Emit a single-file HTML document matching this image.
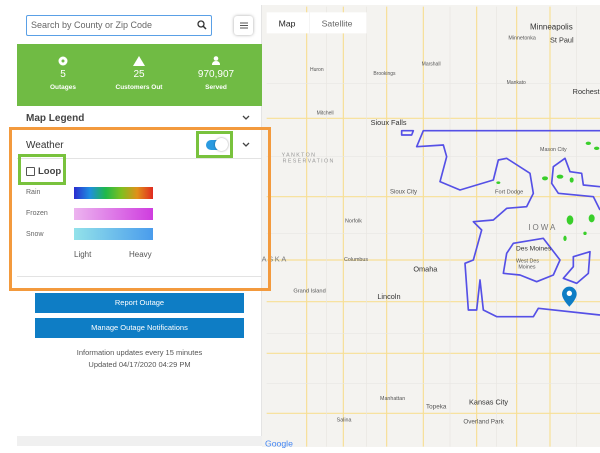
<!DOCTYPE html>
<html><head><meta charset="utf-8"><style>
*{box-sizing:border-box;margin:0;padding:0}
body{width:600px;height:453px;background:#fff;font-family:"Liberation Sans",sans-serif;position:relative;overflow:hidden}
.a{position:absolute}
.panel{left:17px;top:5px;width:245px;height:441px;background:#fff;border-right:1px solid #e4e4e4}
.search{left:26px;top:15px;width:186px;height:21px;border:1.5px solid #5aa0e6;border-radius:2px;font-size:9px;color:#666;padding:4px 4px;background:#fff}
.lb{left:234px;top:16px;width:19px;height:19px;border-radius:3px;background:#fff;box-shadow:0 0 3px rgba(0,0,0,.35)}
.green{left:17px;top:44px;width:245px;height:62px;background:#70bb44;color:#fff;text-align:center}
.st{position:absolute;top:0;width:70px;font-weight:bold}
.st .n{font-size:10px;font-weight:normal;margin-top:25px}
.st .l{font-size:6.5px;margin-top:4px}
.row{font-size:10px;font-weight:bold;color:#444}
.lab{font-size:7px;color:#666}
.bar{left:74px;width:79px;height:12px}
.btn{left:35px;width:209px;height:20px;background:#0e7dc5;color:#fff;font-size:7.5px;text-align:center;line-height:20px}
.info{left:17px;width:245px;text-align:center;font-size:7.5px;color:#555}
</style></head><body>
<div class="a panel"></div>
<div class="a search">Search by County or Zip Code<svg class="a" style="right:4px;top:4px" width="10" height="10" viewBox="0 0 10 10"><circle cx="4" cy="4" r="3" fill="none" stroke="#333" stroke-width="1.3"/><path d="M6 6L9 9" stroke="#333" stroke-width="1.5"/></svg></div>
<div class="a lb"><svg width="19" height="19"><path d="M6 7h8M6 9.5h8M6 12h8" stroke="#555" stroke-width="1"/></svg></div>
<div class="a green">
<div class="st" style="left:11px"><svg class="a" style="left:30px;top:12px" width="10" height="10"><circle cx="5" cy="5" r="4.5" fill="#fff"/><circle cx="5" cy="5" r="1.5" fill="#70bb44"/></svg><div class="n">5</div><div class="l">Outages</div></div>
<div class="st" style="left:87px"><svg class="a" style="left:29px;top:12px" width="12" height="10"><path d="M6 0L12 10H0Z" fill="#fff"/></svg><div class="n">25</div><div class="l">Customers Out</div></div>
<div class="st" style="left:164px"><svg class="a" style="left:31px;top:12px" width="8" height="9"><circle cx="4" cy="2.5" r="2.3" fill="#fff"/><path d="M0 9Q0 5 4 5Q8 5 8 9Z" fill="#fff"/></svg><div class="n">970,907</div><div class="l">Served</div></div>
</div>
<div class="a row" style="left:26px;top:113px">Map Legend</div>
<svg class="a" style="left:242px;top:115px" width="8" height="6"><path d="M1 1L4 4L7 1" fill="none" stroke="#444" stroke-width="1.3"/></svg>
<div class="a" style="left:17px;top:128px;width:245px;height:1px;background:#e3e3e3"></div>
<div class="a row" style="left:26px;top:140px;font-weight:normal;color:#333">Weather</div>
<svg class="a" style="left:242px;top:142px" width="8" height="6"><path d="M1 1L4 4L7 1" fill="none" stroke="#444" stroke-width="1.3"/></svg>
<div class="a" style="left:206px;top:140px;width:20px;height:10px;border-radius:5px;background:#2a9ae0"></div>
<div class="a" style="left:215px;top:138px;width:13px;height:13px;border-radius:50%;background:#fff;box-shadow:0 0 2px rgba(0,0,0,.4)"></div>
<div class="a" style="left:17px;top:158px;width:245px;height:1px;background:#e3e3e3"></div>
<div class="a" style="left:26px;top:167px;width:9px;height:9px;border:1px solid #555;border-radius:1px"></div>
<div class="a row" style="left:38px;top:166px;font-size:9.5px">Loop</div>
<div class="a lab" style="left:26px;top:189px">Rain</div>
<div class="a lab" style="left:26px;top:210px">Frozen</div>
<div class="a lab" style="left:26px;top:231px">Snow</div>
<div class="a bar" style="top:187px;background:linear-gradient(90deg,#2a2ccf,#1f8ee0,#1fb84a,#7fbf20,#e0901a,#e02a20)"></div>
<div class="a bar" style="top:208px;background:linear-gradient(90deg,#ecb4ef,#cf3ddf)"></div>
<div class="a bar" style="top:228px;background:linear-gradient(90deg,#93e2ea,#4a9cec)"></div>
<div class="a" style="left:74px;top:250px;font-size:8px;color:#555">Light</div>
<div class="a" style="left:129px;top:250px;font-size:8px;color:#555">Heavy</div>
<div class="a" style="left:17px;top:276px;width:245px;height:1px;background:#e3e3e3"></div>
<div class="a btn" style="top:293px">Report Outage</div>
<div class="a btn" style="top:318px">Manage Outage Notifications</div>
<div class="a info" style="top:348px">Information updates every 15 minutes</div>
<div class="a info" style="top:360px">Updated 04/17/2020 04:29 PM</div>
<div class="a" style="left:17px;top:436px;width:245px;height:10px;background:#f0f0f0"></div>
<svg class="a" style="left:260px;top:0" width="340" height="453" viewBox="0 0 1020 1359" font-family="Liberation Sans,sans-serif">
<rect x="6" y="15" width="1014" height="1326" fill="#f4f3f0"/>
<g stroke="#f7df95" stroke-width="3.5" fill="none">
<path d="M20 355H1020M20 905H1020M20 590H1020M380 20V1340M490 20V1340M770 20V1340M650 20V1340M250 20V1340M140 20V1340M20 780H1020M20 1060H1020M20 1240H1020M870 20V1340"/>
</g>
<g stroke="#e8e6e2" stroke-width="2" fill="none"><path d="M20 250H1020M20 470H1020M20 700H1020M20 1000H1020M20 1150H1020M320 20V1340M570 20V1340M710 20V1340M950 20V1340M200 20V1340"/></g>
<g fill="#39cf2a"><ellipse cx="930" cy="660" rx="10" ry="14"/><ellipse cx="995" cy="655" rx="9" ry="12"/><ellipse cx="900" cy="530" rx="10" ry="6"/><ellipse cx="935" cy="540" rx="6" ry="8"/><ellipse cx="855" cy="535" rx="9" ry="6"/><ellipse cx="985" cy="430" rx="8" ry="5"/><ellipse cx="1010" cy="445" rx="8" ry="5"/><ellipse cx="915" cy="715" rx="5" ry="8"/><ellipse cx="715" cy="548" rx="6" ry="4"/><ellipse cx="975" cy="700" rx="5" ry="5"/></g>
<g stroke="#5550e6" stroke-width="5" fill="none" stroke-linejoin="round">
<path d="M425 392L460 392L455 405L425 405Z"/>
<path d="M1020 392H490L470 440L550 435L560 470L540 545L600 570L700 540L715 480L740 475L810 520L820 580L800 620L740 625L700 660L640 665L665 690L640 780L615 790L625 930L650 930L660 840L670 930L710 950L820 950L835 925L1020 945"/>
<path d="M760 730L850 715L900 780L880 825L830 845L780 825L730 820L740 760Z"/>
<path d="M940 770L990 755L985 820L950 850L910 835L940 800Z"/>
<path d="M1020 560L970 555L965 520L930 515L915 475L880 500L875 550L895 580L1000 590L1020 630"/>
</g>
<path d="M928 860a22 22 0 0 1 22 22c0 16-22 38-22 38s-22-22-22-38a22 22 0 0 1 22-22z" fill="#0e7dc5"/><circle cx="928" cy="880" r="8" fill="#fff"/>
<g fill="#555" font-size="20">
<text x="810" y="88" font-size="24" fill="#333">Minneapolis</text><text x="870" y="128" font-size="22" fill="#333">St Paul</text><text x="745" y="118" font-size="16">Minnetonka</text>
<text x="938" y="282" font-size="22" fill="#333">Rochest</text><text x="332" y="375" font-size="22" fill="#333">Sioux Falls</text>
<text x="840" y="453" font-size="16">Mason City</text><text x="705" y="580" font-size="17">Fort Dodge</text>
<text x="805" y="690" font-size="24" letter-spacing="6" fill="#777">IOWA</text>
<text x="768" y="752" font-size="20" fill="#333">Des Moines</text><text x="768" y="788" font-size="16">West Des</text><text x="775" y="806" font-size="16">Moines</text>
<text x="390" y="580" font-size="18">Sioux City</text><text x="460" y="814" font-size="22" fill="#333">Omaha</text>
<text x="352" y="897" font-size="22" fill="#333">Lincoln</text><text x="100" y="878" font-size="17">Grand Island</text>
<text x="255" y="668" font-size="16">Norfolk</text><text x="252" y="783" font-size="16">Columbus</text>
<text x="627" y="1213" font-size="22" fill="#333">Kansas City</text><text x="610" y="1270" font-size="19">Overland Park</text>
<text x="498" y="1226" font-size="19">Topeka</text><text x="360" y="1200" font-size="16">Manhattan</text>
<text x="65" y="470" font-size="16" letter-spacing="4" fill="#999">YANKTON</text><text x="68" y="487" font-size="16" letter-spacing="4" fill="#999">RESERVATION</text>
<text x="5" y="785" font-size="22" letter-spacing="5" fill="#777">ASKA</text>
<text x="170" y="343" font-size="15">Mitchell</text><text x="150" y="213" font-size="15">Huron</text><text x="340" y="225" font-size="15">Brookings</text>
<text x="485" y="196" font-size="15">Marshall</text><text x="740" y="252" font-size="15">Mankato</text><text x="230" y="1265" font-size="16">Salina</text>
</g>
<text x="15" y="1340" font-size="26" fill="#4285f4">Google</text>
<rect x="20" y="37" width="300" height="63" fill="#fff"/>
<text x="56" y="79" font-size="26" fill="#222">Map</text><text x="185" y="79" font-size="26" fill="#666">Satellite</text>
<line x1="148" y1="37" x2="148" y2="100" stroke="#eee" stroke-width="2"/>
</svg>
<div class="a" style="left:9px;top:127px;width:262px;height:164px;border:3px solid #f39a3d"></div>
<div class="a" style="left:196px;top:131px;width:37px;height:27px;border:3px solid #79c23d"></div>
<div class="a" style="left:18px;top:154px;width:48px;height:31px;border:3px solid #79c23d"></div>
</body></html>
